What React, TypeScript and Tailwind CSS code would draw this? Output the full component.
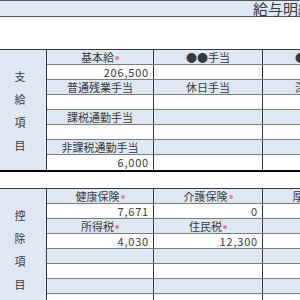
const font = { fontFamily: '"Noto Sans CJK JP", "Noto Sans", sans-serif' };

function Req() {
  return <span className="inline-block w-[4px] h-[4px] ml-[1px] mb-[2px] rounded-full bg-[#ee7f95] align-middle" />;
}

type Cell = { text?: string; req?: boolean; num?: boolean };

function Row({ cells, head, last }: { cells: Cell[]; head?: boolean; last?: boolean }) {
  return (
    <div
      className={`grid grid-cols-[107px_109px_109px] h-[15px] ${last ? "" : "border-b border-[#7d7d7d]"} ${
        head ? "bg-[#dde8f4]" : "bg-white"
      }`}
    >
      {cells.map((c, i) => (
        <div
          key={i}
          className={`border-r border-[#3a3a3a] text-[11px] leading-[14px] text-[#3a3a3a] whitespace-nowrap ${
            c.num ? "text-right pr-[4px] tracking-[0.8px]" : "text-center"
          }`}
        >
          {c.text}
          {c.req && <Req />}
        </div>
      ))}
    </div>
  );
}

function Section({ label, rows }: { label: string[]; rows: { cells: Cell[]; head?: boolean }[] }) {
  return (
    <div className="flex border-t border-b-2 border-t-[#3a3a3a] border-b-black">
      <div className="w-[47px] shrink-0 bg-[#dde8f4] border-r border-[#3a3a3a] flex flex-col items-center justify-center gap-[9px] pr-[6px]">
        {label.map((ch) => (
          <span key={ch} className="text-[11px] leading-[14px] text-[#3a3a3a]">
            {ch}
          </span>
        ))}
      </div>
      <div className="flex flex-col">
        {rows.map((r, i) => (
          <Row key={i} cells={r.cells} head={r.head} last={i === rows.length - 1} />
        ))}
      </div>
    </div>
  );
}

export default function App() {
  const pay = [
    { head: true, cells: [{ text: "基本給", req: true }, { text: "●●手当" }, { text: "●●手当" }] },
    { cells: [{ text: "206,500", num: true }, {}, {}] },
    { head: true, cells: [{ text: "普通残業手当" }, { text: "休日手当" }, { text: "深夜手当" }] },
    { cells: [{}, {}, {}] },
    { head: true, cells: [{ text: "課税通勤手当" }, {}, {}] },
    { cells: [{}, {}, {}] },
    { head: true, cells: [{ text: "非課税通勤手当" }, {}, {}] },
    { cells: [{ text: "6,000", num: true }, {}, {}] },
  ];
  const ded = [
    { head: true, cells: [{ text: "健康保険", req: true }, { text: "介護保険", req: true }, { text: "厚生年金", req: true }] },
    { cells: [{ text: "7,671", num: true }, { text: "0", num: true }, {}] },
    { head: true, cells: [{ text: "所得税", req: true }, { text: "住民税", req: true }, {}] },
    { cells: [{ text: "4,030", num: true }, { text: "12,300", num: true }, {}] },
    { head: true, cells: [{}, {}, {}] },
    { cells: [{}, {}, {}] },
    { head: true, cells: [{}, {}, {}] },
    { cells: [{}, {}, {}] },
  ];

  return (
    <div className="w-[300px] h-[300px] overflow-hidden bg-white" style={font}>
      <div className="w-[380px]">
        <div className="h-[17px] border-y border-[#555] bg-[#dde8f4] pl-[253px] text-[15px] leading-[15px] text-[#3a3a3a] whitespace-nowrap">
          給与明細書
        </div>
        <div className="h-[32px]" />
        <Section label={["支", "給", "項", "目"]} rows={pay} />
        <div className="h-[16px]" />
        <Section label={["控", "除", "項", "目"]} rows={ded} />
      </div>
    </div>
  );
}
